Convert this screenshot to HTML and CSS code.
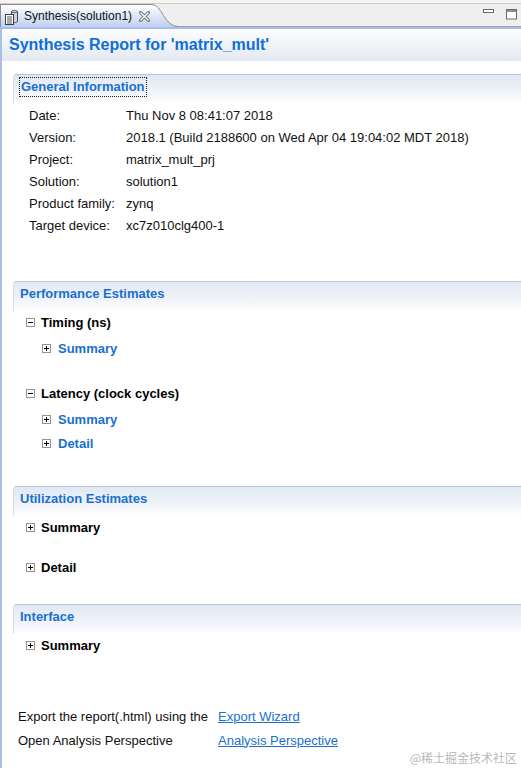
FILE: index.html
```html
<!DOCTYPE html>
<html lang="en">
    <head>
        <meta charset="UTF-8" />
        <meta name="viewport" content="width=device-width, initial-scale=1.0" />
        <title>Synthesis(solution1)</title>
        <link rel="stylesheet" href="styles.css">
    </head>
    <body>
        <div class="tabbar">
            <div class="tab">
                <svg class="tab-icon" width="14" height="16" viewBox="0 0 14 16">
                    <path d="M6.5 2.5 C6.5 1 12.5 1 12.5 2.5 L12.5 12.5 C12.5 14 6.5 14 6.5 12.5 Z" fill="#d4d4d4" stroke="#4a4a4a" />
                    <path d="M6.5 2.5 C6.5 4 12.5 4 12.5 2.5" fill="none" stroke="#4a4a4a" />
                    <rect x="0.5" y="5.5" width="8" height="10" fill="#fff" stroke="#3c3c3c" />
                    <path d="M2 8h5M2 10h5M2 12h5M2 14h5" stroke="#555" />
                </svg>
                <span class="tab-label">Synthesis(solution1)</span>
                <svg class="tab-close" width="11" height="11" viewBox="0 0 11 11">
                    <path d="M1.5 1.5 L9.5 9.5 M9.5 1.5 L1.5 9.5" stroke="#7a7a7a" stroke-width="3.2" stroke-linecap="square" />
                    <path d="M1.5 1.5 L9.5 9.5 M9.5 1.5 L1.5 9.5" stroke="#fff" stroke-width="1.2" />
                </svg>
            </div>
            <svg class="tab-curve" width="26" height="23" viewBox="0 0 26 23">
                <defs>
                    <linearGradient id="tabfill" x1="0" y1="0" x2="0" y2="1">
                        <stop offset="0" stop-color="#ffffff" />
                        <stop offset="1" stop-color="#bed0f0" />
                    </linearGradient>
                </defs>
                <path d="M0 0.5 C10 0.5 12 22.5 26 22.5 L26 23 L0 23 Z" fill="url(#tabfill)" />
                <path d="M0 0.5 C10 0.5 12 22.5 26 22.5" fill="none" stroke="#8d8d8d" />
            </svg>
            <div class="tabbar-fill"></div>
            <div class="win-btns">
                <svg width="11" height="5" viewBox="0 0 11 5"><rect x="0.5" y="0.5" width="10" height="3" fill="#fff" stroke="#6a6a6a" /></svg>
                <svg width="11" height="11" viewBox="0 0 11 11"><rect x="0.5" y="0.5" width="10" height="9.5" fill="#fff" stroke="#6a6a6a" /><path d="M0.5 2h10" stroke="#6a6a6a" stroke-width="1.5" /></svg>
            </div>
        </div>

        <div class="editor">
            <h1 class="report-title">Synthesis Report for 'matrix_mult'</h1>

            <div class="report">
                <div class="section">
                    <div class="section-head"><span class="focus">General Information</span></div>
                    <div class="info">
                        <span>Date:</span><span>Thu Nov 8 08:41:07 2018</span>
                        <span>Version:</span><span>2018.1 (Build 2188600 on Wed Apr 04 19:04:02 MDT 2018)</span>
                        <span>Project:</span><span>matrix_mult_prj</span>
                        <span>Solution:</span><span>solution1</span>
                        <span>Product family:</span><span>zynq</span>
                        <span>Target device:</span><span>xc7z010clg400-1</span>
                    </div>
                </div>

                <div class="section sec-perf">
                    <div class="section-head">Performance Estimates</div>
                    <div class="node"><span class="toggle minus"></span>Timing (ns)</div>
                    <div class="node child gap-s"><span class="toggle plus"></span>Summary</div>
                    <div class="node gap-l"><span class="toggle minus"></span>Latency (clock cycles)</div>
                    <div class="node child gap-s"><span class="toggle plus"></span>Summary</div>
                    <div class="node child gap-xs"><span class="toggle plus"></span>Detail</div>
                </div>

                <div class="section sec-util">
                    <div class="section-head">Utilization Estimates</div>
                    <div class="node"><span class="toggle plus"></span>Summary</div>
                    <div class="node gap-m"><span class="toggle plus"></span>Detail</div>
                </div>

                <div class="section sec-iface">
                    <div class="section-head">Interface</div>
                    <div class="node"><span class="toggle plus"></span>Summary</div>
                </div>

                <div class="export">
                    <span>Export the report(.html) using the</span><a href="#">Export Wizard</a>
                    <span>Open Analysis Perspective</span><a href="#">Analysis Perspective</a>
                </div>
            </div>
        </div>

        <div class="watermark">@稀土掘金技术社区</div>
    </body>
</html>
```

FILE: styles.css
```css
:root {
  --blue: #1a6fd0;
  --title-blue: #0f6fd8;
  --head-border: #b7c8dc;
  --text: #111;
  --font: 'Liberation Sans', Arial, sans-serif;
}

* {
  box-sizing: border-box;
  margin: 0;
  padding: 0;
}

html, body {
  height: 100%;
}

body {
  font-family: var(--font);
  font-size: 13px;
  color: var(--text);
  background: #fff;
  overflow: hidden;
  position: relative;
}

/* tab strip */
.tabbar {
  display: flex;
  align-items: flex-end;
  height: 27px;
  background: linear-gradient(to bottom, #f6f5f2 0 3px, #d2cec6 3px 4px, #efefef 4px 26px, #a3a3a3 26px 27px);
}

.tab {
  display: flex;
  align-items: center;
  height: 23px;
  width: 152px;
  padding-left: 4px;
  border-top: 1px solid #8d8d8d;
  border-left: 1px solid #8d8d8d;
  background: linear-gradient(to bottom, #ffffff, #bed0f0);
  font-size: 12px;
  color: #111;
}

.tab-icon {
  margin-right: 5px;
  margin-top: 2px;
}

.tab-close {
  margin-left: 7px;
}

.tab-curve {
  display: block;
}

.tabbar-fill {
  flex: 1;
}

.win-btns {
  display: flex;
  align-items: flex-start;
  gap: 12px;
  align-self: flex-start;
  margin-top: 9px;
  margin-right: 4px;
}

.win-btns svg {
  display: block;
}

/* editor area */
.editor {
  border-top: 2px solid #a3bfee;
  border-left: 2px solid #a9c0e6;
  height: calc(100% - 27px);
}

.report-title {
  height: 32px;
  line-height: 32px;
  padding-left: 7px;
  font-size: 16px;
  font-weight: bold;
  color: var(--title-blue);
  background: linear-gradient(to bottom, #fdfdff, #e3e8f1);
}

.report {
  padding-top: 13px;
}

.section {
  margin-left: 11px;
}

.section-head {
  height: 30px;
  padding: 1px 0 0 6px;
  line-height: 22px;
  font-weight: bold;
  color: var(--blue);
  border-top: 1px solid var(--head-border);
  border-left: 1px solid #d6dfeb;
  border-top-left-radius: 4px;
  background: linear-gradient(to bottom, #e1e8f3, #f3f6fa 70%, #fff);
}

.focus {
  display: inline-block;
  margin-left: -1px;
  padding: 0 1px;
  line-height: 18px;
  margin-top: 1px;
  border: 1px dotted #222;
}

.info {
  display: grid;
  grid-template-columns: 97px 1fr;
  grid-auto-rows: 22px;
  align-items: center;
  padding-left: 16px;
  white-space: nowrap;
}

.sec-perf { margin-top: 45px; }
.sec-util { margin-top: 32px; }
.sec-iface { margin-top: 26px; }

.node {
  display: flex;
  align-items: center;
  height: 22px;
  padding-left: 13px;
  font-weight: bold;
  color: #000;
}

.node.child {
  padding-left: 29px;
  color: var(--blue);
}

.gap-xs { margin-top: 2px; }
.gap-s { margin-top: 4px; }
.gap-m { margin-top: 18px; }
.gap-l { margin-top: 23px; }

.toggle {
  position: relative;
  width: 9px;
  height: 9px;
  margin-right: 6px;
  border: 1px solid #939393;
  background: #fff;
}

.child .toggle {
  margin-right: 7px;
}

.toggle::before,
.plus::after {
  content: "";
  position: absolute;
  background: #000;
}

.toggle::before {
  left: 1px;
  top: 3px;
  width: 5px;
  height: 1px;
}

.plus::after {
  left: 3px;
  top: 1px;
  width: 1px;
  height: 5px;
}

.export {
  display: grid;
  grid-template-columns: 200px auto;
  grid-auto-rows: 24px;
  align-items: center;
  justify-content: start;
  margin-top: 48px;
  padding-left: 16px;
  color: #111;
}

.export a {
  color: var(--blue);
}

.watermark {
  position: absolute;
  right: 4px;
  bottom: 2px;
  font-family: 'Noto Sans CJK SC', sans-serif;
  font-size: 12px;
  color: #b9b9b9;
}
```
